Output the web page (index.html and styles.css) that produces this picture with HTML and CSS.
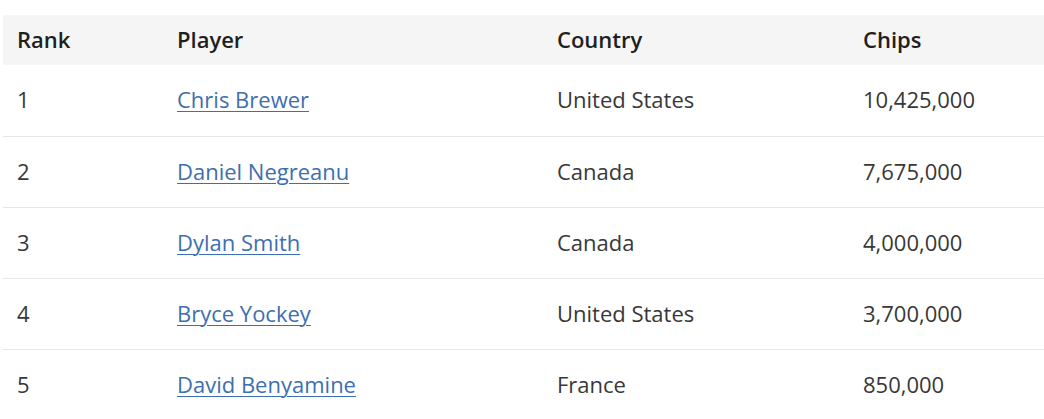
FILE: index.html
```html
<!DOCTYPE html>
<html>
<head>
<meta charset="utf-8">
<link rel="stylesheet" href="styles.css">
</head>
<body>
<table class="chips">
  <colgroup>
    <col class="c-rank"><col class="c-player"><col class="c-country"><col class="c-chips">
  </colgroup>
  <thead>
    <tr><th>Rank</th><th>Player</th><th>Country</th><th>Chips</th></tr>
  </thead>
  <tbody>
    <tr><td>1</td><td><a href="#">Chris Brewer</a></td><td>United States</td><td>10,425,000</td></tr>
    <tr><td>2</td><td><a href="#">Daniel Negreanu</a></td><td>Canada</td><td>7,675,000</td></tr>
    <tr><td>3</td><td><a href="#">Dylan Smith</a></td><td>Canada</td><td>4,000,000</td></tr>
    <tr><td>4</td><td><a href="#">Bryce Yockey</a></td><td>United States</td><td>3,700,000</td></tr>
    <tr><td>5</td><td><a href="#">David Benyamine</a></td><td>France</td><td>850,000</td></tr>
  </tbody>
</table>
</body>
</html>
```

FILE: styles.css
```css
html, body {
  margin: 0;
  padding: 0;
  background: #ffffff;
}
body {
  font-family: "Open Sans", "Noto Sans", sans-serif;
  font-size: 22px;
  color: #383838;
  padding: 15px 0 0 3px;
  overflow: hidden;
}
.chips {
  border-collapse: collapse;
  table-layout: fixed;
  width: 1045px;
}
.c-rank { width: 160px; }
.c-player { width: 380px; }
.c-country { width: 306px; }
.c-chips { width: 199px; }
.chips th {
  background: #f5f5f5;
  color: #1f1f1f;
  font-weight: 600;
  text-align: left;
  height: 48px;
  padding: 0 0 2px 14px;
  vertical-align: middle;
}
.chips td {
  height: 67px;
  padding: 0 0 3px 14px;
  vertical-align: middle;
  border-top: 1px solid #e6e6e6;
}
.chips tbody tr:first-child td {
  border-top: none;
  height: 68px;
}
.chips a {
  color: #3d6fb0;
  text-decoration: underline;
  text-underline-offset: 3px;
  text-decoration-thickness: 1px;
}
```
